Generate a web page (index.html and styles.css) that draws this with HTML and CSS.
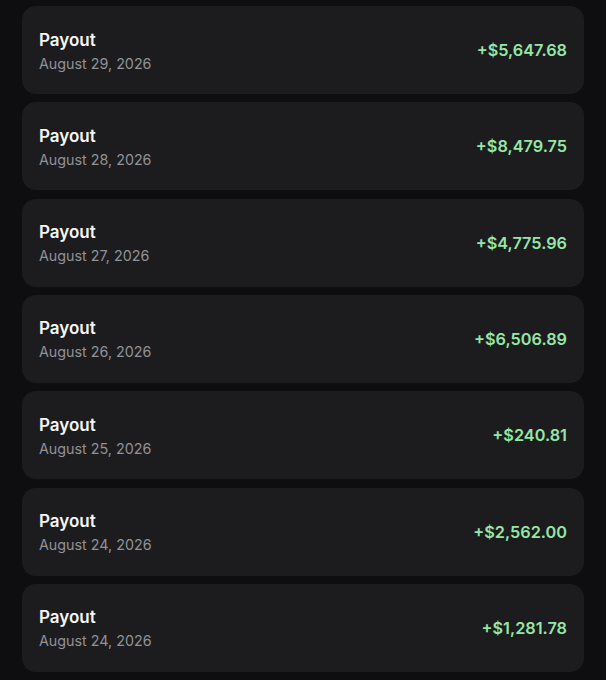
FILE: index.html
```html
<!DOCTYPE html>
<html>
<head>
<meta charset="utf-8">
<link rel="stylesheet" href="styles.css">
</head>
<body>
<div class="list">
  <div class="card"><div class="info"><div class="title">Payout</div><div class="date">August 29, 2026</div></div><div class="amount">+$5,647.68</div></div>
  <div class="card"><div class="info"><div class="title">Payout</div><div class="date">August 28, 2026</div></div><div class="amount">+$8,479.75</div></div>
  <div class="card"><div class="info"><div class="title">Payout</div><div class="date">August 27, 2026</div></div><div class="amount">+$4,775.96</div></div>
  <div class="card"><div class="info"><div class="title">Payout</div><div class="date">August 26, 2026</div></div><div class="amount">+$6,506.89</div></div>
  <div class="card"><div class="info"><div class="title">Payout</div><div class="date">August 25, 2026</div></div><div class="amount">+$240.81</div></div>
  <div class="card"><div class="info"><div class="title">Payout</div><div class="date">August 24, 2026</div></div><div class="amount">+$2,562.00</div></div>
  <div class="card"><div class="info"><div class="title">Payout</div><div class="date">August 24, 2026</div></div><div class="amount">+$1,281.78</div></div>
</div>
</body>
</html>
```
FILE: styles.css
```css
html, body {
  margin: 0;
  padding: 0;
  background: #0e0e10;
}
body {
  font-family: Inter, "Noto Sans", sans-serif;
  overflow: hidden;
}
.list {
  display: flex;
  flex-direction: column;
  gap: 8.33px;
  padding: 6px 22px 0 22px;
}
.card {
  height: 88px;
  box-sizing: border-box;
  background: #1c1c1f;
  border-radius: 14px;
  display: flex;
  align-items: center;
  justify-content: space-between;
  padding: 0 17px;
}
.info {
  display: flex;
  flex-direction: column;
  gap: 3px;
  margin-top: 2px;
}
.title {
  color: #f5f5f7;
  font-size: 17px;
  font-weight: 600;
  line-height: 22px;
}
.date {
  color: #929297;
  font-size: 14.3px;
  line-height: 20px;
}
.amount {
  color: #96e6a6;
  font-size: 16.3px;
  font-weight: 600;
}
```
